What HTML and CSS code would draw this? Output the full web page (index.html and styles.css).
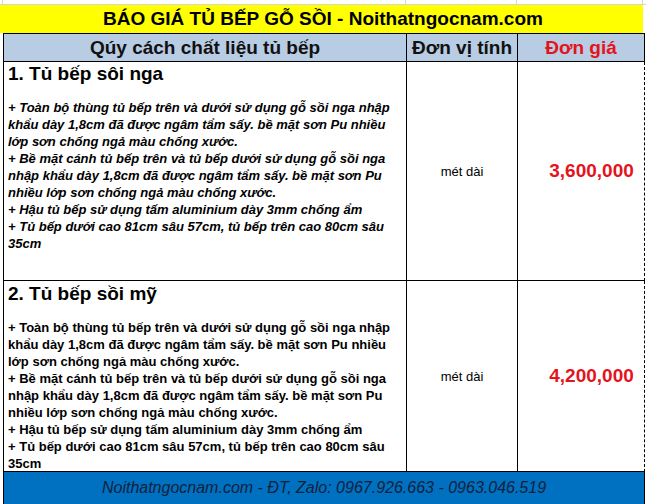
FILE: index.html
```html
<!DOCTYPE html>
<html lang="vi">
<head>
<meta charset="utf-8">
<link rel="stylesheet" href="styles.css">
</head>
<body>
<div class="sheet">
  <div class="topstrip">
    <div class="gcell c0"></div>
    <div class="gcell c1"></div>
    <div class="gcell c2"></div>
    <div class="gcell c3"></div>
  </div>
  <div class="title">BÁO GIÁ TỦ BẾP GỖ SỒI - Noithatngocnam.com</div>
  <div class="grid">
    <div class="hd hd-spec">Qúy cách chất liệu tủ bếp</div>
    <div class="hd hd-unit">Đơn vị tính</div>
    <div class="hd hd-price">Đơn giá</div>

    <div class="cell spec r1">
      <div class="name">1. Tủ bếp sôi nga</div>
      <div class="desc italic">+ Toàn bộ thùng tủ bếp trên và dưới sử dụng gỗ sồi nga nhập khẩu dày 1,8cm đã được ngâm tẩm sấy. bề mặt sơn Pu nhiều lớp sơn chống ngả màu chống xước.<br>+ Bề mặt cánh tủ bếp trên và tủ bếp dưới sử dụng gỗ sồi nga nhập khẩu dày 1,8cm đã được ngâm tẩm sấy. bề mặt sơn Pu nhiều lớp sơn chống ngả màu chống xước.<br>+ Hậu tủ bếp sử dụng tấm aluminium dày 3mm chống ẩm<br>+ Tủ bếp dưới cao 81cm sâu 57cm, tủ bếp trên cao 80cm sâu 35cm</div>
    </div>
    <div class="cell unit r1">mét dài</div>
    <div class="cell price r1">3,600,000</div>

    <div class="cell spec r2">
      <div class="name">2. Tủ bếp sồi mỹ</div>
      <div class="desc">+ Toàn bộ thùng tủ bếp trên và dưới sử dụng gỗ sồi nga nhập khẩu dày 1,8cm đã được ngâm tẩm sấy. bề mặt sơn Pu nhiều lớp sơn chống ngả màu chống xước.<br>+ Bề mặt cánh tủ bếp trên và tủ bếp dưới sử dụng gỗ sồi nga nhập khẩu dày 1,8cm đã được ngâm tẩm sấy. bề mặt sơn Pu nhiều lớp sơn chống ngả màu chống xước.<br>+ Hậu tủ bếp sử dụng tấm aluminium dày 3mm chống ẩm<br>+ Tủ bếp dưới cao 81cm sâu 57cm, tủ bếp trên cao 80cm sâu 35cm</div>
    </div>
    <div class="cell unit r2">mét dài</div>
    <div class="cell price r2">4,200,000</div>

    <div class="footer">Noithatngocnam.com - ĐT, Zalo: 0967.926.663 - 0963.046.519</div>
  </div>
</div>
</body>
</html>
```

FILE: styles.css
```css
* { box-sizing: border-box; }
html, body { margin: 0; padding: 0; background: #fff; }
body {
  font-family: "Liberation Sans", Arial, sans-serif;
  color: #000;
  width: 646px;
  height: 504px;
  overflow: hidden;
}
.topstrip {
  display: grid;
  grid-template-columns: 3px 403px 111px 126px 3px;
  height: 5px;
  border-bottom: 1px solid #d4d4d4;
}
.gcell { border-right: 1px solid #d4d4d4; }
.title {
  width: 643px;
  height: 28px;
  background: #ffff00;
  font-weight: bold;
  font-size: 19px;
  line-height: 28px;
  text-align: center;
  padding-left: 3px;
}
.grid {
  margin-left: 3px;
  width: 641px;
  display: grid;
  grid-template-columns: 403px 111px 127px;
  grid-template-rows: 29px 219px 191px 40px;
  border-left: 1px solid #000;
}
.hd {
  background: #b8cce4;
  border-top: 1px solid #000;
  border-bottom: 1px solid #000;
  border-right: 1px solid #000;
  font-size: 19px;
  font-weight: bold;
  display: flex;
  align-items: center;
  justify-content: center;
  padding-top: 1px;
  color: #111;
}
.hd-price { color: #e4131c; }
.cell {
  border-right: 1px solid #000;
  border-bottom: 1px solid #000;
}
.spec { padding: 1px 3px 0 4px; }
.name {
  font-size: 19px;
  font-weight: bold;
  line-height: 21px;
  margin-bottom: 15px;
}
.r2 .name { margin-top: 1px; }
.desc {
  font-size: 13px;
  font-weight: bold;
  line-height: 17px;
}
.italic { font-style: italic; }
.unit {
  display: flex;
  align-items: center;
  justify-content: center;
  font-size: 13px;
}
.price {
  border-right: 1px dashed #000;
  display: flex;
  align-items: center;
  justify-content: center;
  font-size: 19px;
  font-weight: bold;
  color: #e4131c;
  padding-left: 21px;
}
.footer {
  grid-column: 1 / 4;
  background: #0070c0;
  border-right: 1px solid #000;
  color: #10223c;
  font-style: italic;
  font-size: 16px;
  text-align: center;
  line-height: 32px;
}
```
